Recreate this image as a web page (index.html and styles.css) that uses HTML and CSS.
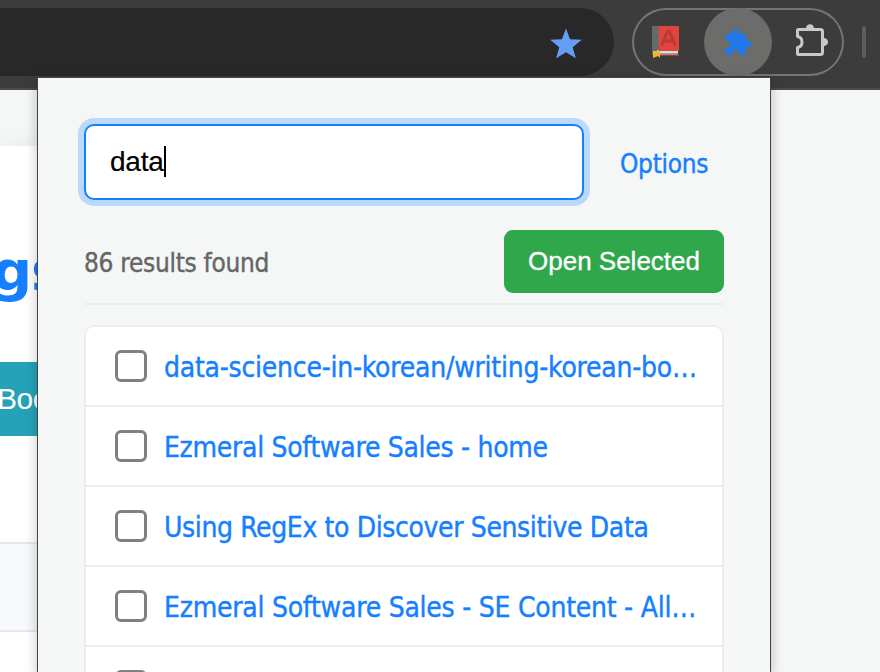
FILE: index.html
```html
<!DOCTYPE html>
<html lang="en">
<head>
<meta charset="utf-8">
<title>Bookmark search</title>
<link rel="stylesheet" href="styles.css">
</head>
<body>
<header class="toolbar">
  <div class="omnibox">
    <svg class="star" width="32" height="32" viewBox="0 0 32 32"><path d="M16 0.4 20.1 11.3 31.8 11.8 22.7 19.2 25.8 30.2 16 24.2 6.2 30.2 9.3 19.2 0.2 11.8 11.9 11.3z"/></svg>
  </div>
  <div class="extensions">
    <span class="ext">
      <svg width="28" height="34" viewBox="0 0 28 34">
        <path fill="#5f6d6e" d="M0 1h7v29H0z"/>
        <path fill="#d9dfe0" d="M5 25h21v5H5z"/>
        <path fill="#8fa9ad" d="M8 28h18v1.500H8z"/>
        <path fill="#b93430" d="M5 29.500h22v1.500H5z"/>
        <path fill="#e0443c" d="M6.500 1H27v25H6.500z"/>
        <path fill="none" stroke="#b83a34" stroke-width="2.800" d="M9.500 20.500 15.500 6.500h2L23.500 20.500M11.500 16h10"/>
        <path fill="#f2b632" d="M1 26h7v7l-2-2-5 2z"/>
      </svg>
    </span>
    <span class="ext ext-active">
      <svg width="28" height="28" viewBox="0 0 28 28"><path fill="#2078ea" d="M3.500 5.500H8C7.200 2.500 8.800 1 11 1S14.800 2.500 14 5.500H19Q21 5.500 21 7.500V12.800C24 11.800 26.500 13.500 26.500 16S24 20.200 21 19.200V25Q21 27 19 27H14.500C15 23.800 13 21.800 11 21.800S7 23.800 7.500 27H2.500Q0.500 27 0.500 25V20C3.500 20.500 5.500 18.300 5.500 16.200S3.500 12 0.500 12.500V8.500Q0.500 5.500 3.500 5.500z"/></svg>
    </span>
    <span class="ext ext-menu">
      <svg width="34" height="34" viewBox="0 0 34 34"><path fill="#c9c9c9" d="M11 4.500C11 1.500 13 .2 15 .2s4 1.300 4 4.300zM28 14c3.500 0 5 2 5 4s-1.500 4-5 4z"/><path fill="none" stroke="#c9c9c9" stroke-width="3" stroke-linejoin="round" d="M3.500 5.500h22q2 0 2 2v21q0 2-2 2h-22q-1 0-1-1v-6c6-1 6-10 0-11v-6q0-1 1-1z"/></svg>
    </span>
  </div>
  <div class="divider"></div>
</header>

<main class="page">
  <section class="card">
    <h1 class="heading">gs</h1>
    <div class="page-button">Boo</div>
    <div class="table-row"></div>
  </section>
</main>

<div class="popup">
  <div class="search-row">
    <div class="search"><span class="query">data</span><span class="caret"></span></div>
    <a class="options">Options</a>
  </div>
  <div class="summary">
    <span class="count">86 results found</span>
    <button class="open">Open Selected</button>
  </div>
  <ul class="results">
    <li><i class="check"></i><a class="r1">data-science-in-korean/writing-korean-bo…</a></li>
    <li><i class="check"></i><a class="r2">Ezmeral Software Sales - home</a></li>
    <li><i class="check"></i><a class="r3">Using RegEx to Discover Sensitive Data</a></li>
    <li><i class="check"></i><a class="r4">Ezmeral Software Sales - SE Content - All…</a></li>
    <li><i class="check"></i></li>
  </ul>
</div>
</body>
</html>
```

FILE: styles.css
```css
* { box-sizing: border-box; }
html, body { margin: 0; height: 672px; overflow: hidden; }
body {
  position: relative;
  background: #f5f7f7;
  font-family: "DejaVu Sans Condensed", "DejaVu Sans", sans-serif;
  font-stretch: condensed;
}
.toolbar {
  display: flex;
  align-items: flex-start;
  height: 90px;
  padding-top: 8px;
  background: #3c3c3c;
  border-bottom: 2px solid #4a4a4a;
}
.omnibox {
  display: flex;
  justify-content: flex-end;
  width: 614px;
  height: 68px;
  padding: 20px 32px 0 0;
  border-radius: 0 34px 34px 0;
  background: #282828;
}
.star { fill: #669df6; }
.extensions {
  display: flex;
  width: 212px;
  height: 68px;
  margin-left: 18px;
  border-radius: 34px;
  box-shadow: inset 0 0 0 2px #757575;
}
.ext {
  display: flex;
  align-items: center;
  justify-content: center;
  width: 68px;
  height: 68px;
}
.ext + .ext { margin-left: 4px; }
.ext-active { padding-left: 2px; border-radius: 50%; background: #6c6c6a; }
.ext-menu { padding: 0 0 2px 3px; }
.divider {
  width: 4px;
  height: 32px;
  margin: 18px 0 0 18px;
  border-radius: 2px;
  background: #5c5c5c;
}
.page { padding-top: 56px; }
.card {
  width: 60px;
  height: 526px;
  overflow: hidden;
  background: #fff;
  box-shadow: 0 0 24px rgba(0, 0, 0, .06);
}
.heading {
  height: 216px;
  margin: 0;
  padding-top: 92px;
  color: #167fff;
  font: bold 56px/66px "DejaVu Sans", sans-serif;
  letter-spacing: -1px;
  text-indent: -8px;
}
.page-button {
  height: 74px;
  color: #fff;
  background: #26a2b8;
  font: 30px/74px "Liberation Sans", sans-serif;
  letter-spacing: -.5px;
  text-indent: -3px;
}
.table-row {
  height: 90px;
  margin-top: 106px;
  border: solid #e4e8ed;
  border-width: 2px 0;
  background: #f8f9fc;
}
.popup {
  position: absolute;
  top: 77px;
  left: 37px;
  display: flex;
  flex-direction: column;
  width: 734px;
  height: 595px;
  padding: 46px 46px 0;
  border: 1px solid #444;
  border-bottom: 0;
  background: #f5f7f7;
  box-shadow: 0 4px 12px rgba(0, 0, 0, .24);
}
.search-row { display: flex; align-items: center; }
.search {
  display: flex;
  align-items: center;
  width: 500px;
  height: 76px;
  padding-left: 24px;
  border: 2px solid #167fff;
  border-radius: 10px;
  background: #fff;
  box-shadow: 0 0 0 6px #bbd9f8;
  font: 28px/32px "Liberation Sans", sans-serif;
}
.query { letter-spacing: -.2px; -webkit-text-stroke: .2px; }
.caret { width: 2px; height: 31px; margin-bottom: 1px; background: #000; }
.options {
  margin: 4px 0 0 36px;
  color: #167fff;
  font-size: 26px;
  letter-spacing: -.3px;
  -webkit-text-stroke: .4px;
}
.summary {
  display: flex;
  flex: none;
  align-items: center;
  justify-content: space-between;
  width: 640px;
  height: 75px;
  margin-top: 30px;
  padding-bottom: 10px;
  border-bottom: 2px solid #ededed;
}
.count {
  margin-top: 2px;
  color: #666;
  font-size: 26px;
  letter-spacing: -.3px;
  -webkit-text-stroke: .4px;
}
.open {
  width: 220px;
  height: 63px;
  padding: 0;
  border: 0;
  border-radius: 9px;
  color: #fff;
  background: #31a74c;
  font: 26px/63px "Liberation Sans", sans-serif;
  -webkit-text-stroke: .3px;
}
.results {
  flex: 1;
  width: 640px;
  min-height: 0;
  margin: 20px 0 0;
  padding: 0;
  overflow: hidden;
  border: 2px solid #ededed;
  border-bottom: 0;
  border-radius: 10px 10px 0 0;
  background: #fff;
  list-style: none;
}
.results li {
  display: flex;
  align-items: center;
  height: 80px;
  padding-left: 29px;
  border-bottom: 2px solid #ededed;
}
.check {
  width: 32px;
  height: 32px;
  border: 3px solid #808080;
  border-radius: 6px;
  background: #fff;
}
.results a {
  margin: 4px 0 0 17px;
  color: #167fff;
  font-size: 28px;
  line-height: 36px;
  letter-spacing: -.25px;
  white-space: nowrap;
  -webkit-text-stroke: .4px;
}
.results .r2 { letter-spacing: -.3px; }
.results .r3 { letter-spacing: -.38px; }
```
